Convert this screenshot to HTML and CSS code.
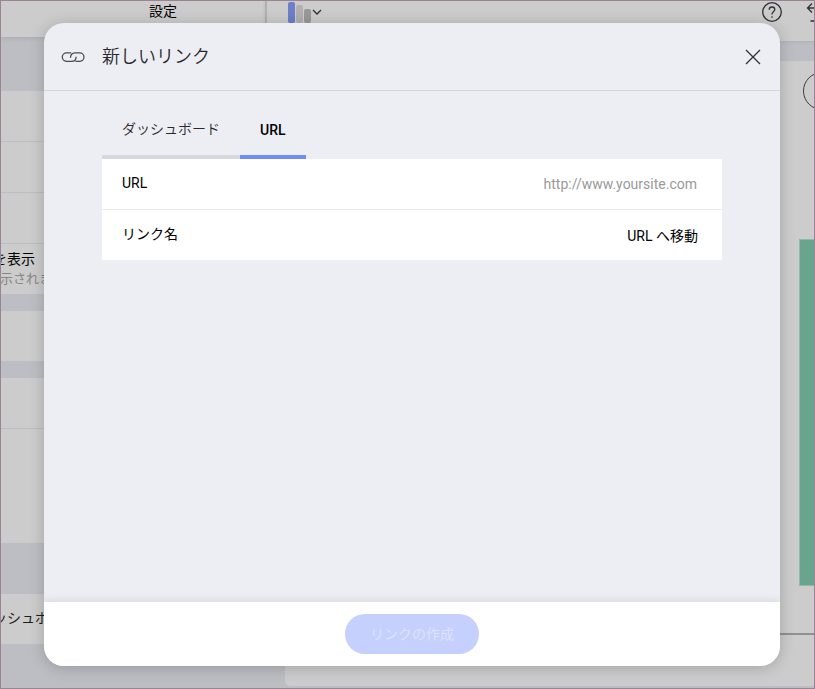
FILE: index.html
```html
<!DOCTYPE html>
<html lang="ja">
<head>
<meta charset="utf-8">
<title>新しいリンク</title>
<link rel="stylesheet" href="styles.css">
</head>
<body>
<div class="app">
  <aside class="sidebar">
    <header class="side-head">設定</header>
    <div class="group first"><div class="row"></div><div class="row"></div><div class="row"></div>
      <div class="row option"><span class="option-title">を表示</span><span class="option-note">示されます</span></div>
    </div>
    <div class="group"><div class="row"></div></div>
    <div class="group tall"><div class="row"></div></div>
    <div class="group last"><div class="row link-row">ッシュボード</div></div>
  </aside>
  <main class="editor">
    <header class="toolbar">
      <span class="bars"><i></i><i></i><i></i></span>
      <svg class="chevron" width="10" height="6" viewBox="0 0 10 6"><path d="M1 1l4 4 4-4"/></svg>
      <svg class="help" width="20" height="20" viewBox="0 0 20 20"><circle cx="10" cy="10" r="9.3"/><path d="M7.2 7.7C7.2 5.8 8.4 5 10 5s2.800 1 2.800 2.600c0 2.100-2.800 2.200-2.800 4.500v.5M10 14.200v1.500"/></svg>
      <svg class="undo" width="18" height="20" viewBox="0 0 18 20"><path d="M6 1.500L1.500 6 6 10.500M1.500 6h9a6 6 0 0 1 6 6.500 6 6 0 0 1-6 6.500H4.500"/></svg>
    </header>
    <section class="canvas">
      <div class="round-button"></div>
      <div class="chart"><div class="bar"></div></div>
    </section>
  </main>
</div>
<div class="overlay">
  <div class="dialog" role="dialog">
    <header class="dialog-head">
      <svg class="link-icon" width="24" height="12" viewBox="0 0 24 12"><path d="M10.200 1.900H5.500a4.200 4.200 0 0 0 0 8.400h5.200c2.800 0 4.400-2 4.400-4.600M9.500 6.700c0-2.800 1.700-4.800 4.300-4.800h5a4.200 4.200 0 0 1 0 8.400H14.500"/></svg>
      <h1>新しいリンク</h1>
      <svg class="close" width="16" height="16" viewBox="0 0 16 16"><path d="M1 1l14 14M15 1L1 15"/></svg>
    </header>
    <div class="dialog-body">
      <nav class="tabs"><span class="tab">ダッシュボード</span><span class="tab active">URL</span></nav>
      <div class="fields">
        <div class="field"><span class="url-label">URL</span><span class="placeholder">http://www.yoursite.com</span></div>
        <div class="field"><span class="name-label">リンク名</span><span class="value">URL へ移動</span></div>
      </div>
    </div>
    <footer class="dialog-foot"><button class="create" disabled>リンクの作成</button></footer>
  </div>
</div>
</body>
</html>
```
FILE: styles.css
```css
* { box-sizing: border-box; }
body {
  margin: 0;
  width: 815px;
  height: 689px;
  overflow: hidden;
  position: relative;
  font-family: Roboto, "Noto Sans CJK JP", sans-serif;
  font-size: 14px;
  color: #000;
}
svg { fill: none; stroke: #303033; flex: none; }
.app {
  display: flex;
  height: 689px;
  overflow: hidden;
  background: #bdbec4;
  border: 1px solid #9c8292;
}
.sidebar { flex: 0 0 264px; }
.side-head {
  height: 36px;
  line-height: 21px;
  padding-left: 148px;
  background: #ccc;
  box-shadow: 0 1px 5px rgba(0,0,0,.12);
}
.group { margin-bottom: 17px; background: #ccc; }
.group.first { margin-top: 54px; }
.row { height: 51px; border-bottom: 1px solid #bdbec4; }
.group .row:last-child { height: 50px; border-bottom: 0; }
.group.tall { height: 165px; margin-bottom: 51px; }
.group.tall .row:last-child { height: 51px; border-bottom: 1px solid #bdbec4; }
.group.last { margin-bottom: 0; }
.group .option:last-child {
  height: 50px;
  display: flex;
  flex-direction: column;
  margin-left: -8px;
  padding-top: 5px;
  line-height: 20px;
}
.option-note { font-size: 13px; color: #858585; margin-left: 7px; line-height: 19px; }
.link-row { line-height: 48px; margin-left: -8px; color: #1d1d20; }
.editor { flex: 0 0 549px; }
.toolbar {
  display: flex;
  height: 40px;
  border-left: 2px solid #b0b0b0;
  background: #ccc;
  padding-left: 21px;
  box-shadow: 0 1px 4px rgba(0,0,0,.08);
}
.bars { display: flex; align-items: flex-end; gap: 1px; height: 22px; flex: none; }
.bars i { width: 7px; border-radius: 2px; background: #b1b1b1; height: 18px; }
.bars i:first-child { background: #6c7fc8; height: 21px; }
.bars i:last-child { background: #999; height: 14px; }
.chevron { margin: 8px 0 0 1px; stroke-width: 1.3; }
.help { margin: 1px 0 0 440px; stroke-width: 1.3; }
.undo { margin: 1px 0 0 24px; stroke-width: 1.3; }
.canvas {
  margin: 20px 0 0 20px;
  height: 625px;
  background: #ccc;
  border-bottom-left-radius: 5px;
  overflow: hidden;
}
.round-button {
  width: 38px;
  height: 38px;
  border: 1.5px solid #3c3c3e;
  border-radius: 50%;
  margin: 11px 0 0 518px;
}
.chart { margin-top: 129px; height: 396px; border-bottom: 2px solid #919191; }
.bar {
  margin-left: 514px;
  height: 347px;
  background: #69a58e;
  border: 1px solid #91b9aa;
  border-right: 0;
}
.overlay { position: absolute; inset: 0; padding: 23px 35px 23px 44px; }
.dialog {
  display: flex;
  flex-direction: column;
  height: 643px;
  border-radius: 20px;
  background: #edeef4;
  box-shadow: 0 2px 16px rgba(0,0,0,.2);
  overflow: hidden;
}
.dialog-head {
  display: flex;
  align-items: center;
  height: 68px;
  padding: 0 19px 0 17px;
  border-bottom: 1px solid #d5d6db;
}
.dialog-head h1 { flex: 1; margin: -4px 0 0 17px; font-size: 18px; font-weight: 350; color: #28282b; }
.link-icon { stroke-width: 1.3; stroke: #4b4b4e; }
.close { stroke-width: 1.3; }
.dialog-body { flex: 1; padding: 0 58px; }
.tabs { display: flex; height: 68px; }
.tab {
  width: 138px;
  padding-left: 20px;
  line-height: 77px;
  border-bottom: 4px solid #d7d8dd;
  font-weight: 350;
  color: #28282b;
  white-space: nowrap;
}
.tab.active { width: 66px; border-color: #6f8cf8; font-weight: 500; color: #000; line-height: 78px; }
.fields { background: #fff; }
.field {
  display: flex;
  justify-content: space-between;
  height: 50px;
  padding: 0 24px 0 20px;
  line-height: 49px;
}
.field + .field { height: 51px; border-top: 1px solid #e9eaee; }
.placeholder { color: #999; line-height: 50px; padding-right: 1px; }
.value { line-height: 52px; }
.dialog-foot {
  display: flex;
  justify-content: center;
  height: 64px;
  padding-top: 12px;
  background: #fff;
  box-shadow: 0 -1px 8px rgba(0,0,0,.1);
}
.create {
  width: 134px;
  height: 40px;
  border: 0;
  border-radius: 20px;
  padding: 0 0 2px;
  background: #c5d0fd;
  color: #dce3ff;
  font: 14px Roboto, "Noto Sans CJK JP", sans-serif;
}
```
